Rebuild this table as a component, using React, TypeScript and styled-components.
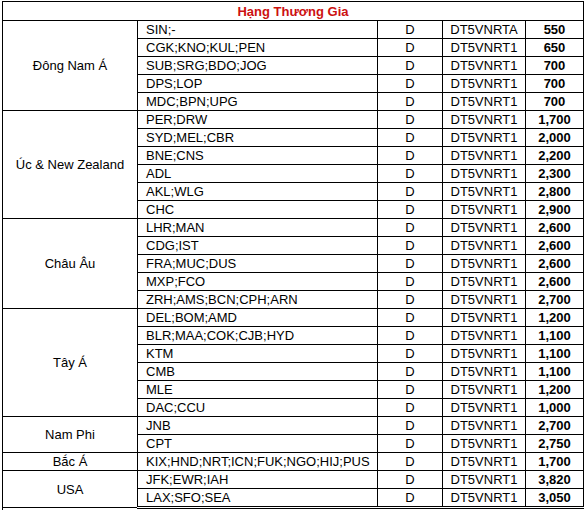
import React from "react";
import styled, { createGlobalStyle } from "styled-components";

type Fare = { route: string; cls: string; code: string; price: string };
type Region = { name: string; fares: Fare[] };

const f = (route: string, price: string, code = "DT5VNRT1"): Fare => ({ route, cls: "D", code, price });

const regions: Region[] = [
    {
        name: "Đông Nam Á",
        fares: [
            f("SIN;-", "550", "DT5VNRTA"),
            f("CGK;KNO;KUL;PEN", "650"),
            f("SUB;SRG;BDO;JOG", "700"),
            f("DPS;LOP", "700"),
            f("MDC;BPN;UPG", "700"),
        ],
    },
    {
        name: "Úc & New Zealand",
        fares: [
            f("PER;DRW", "1,700"),
            f("SYD;MEL;CBR", "2,000"),
            f("BNE;CNS", "2,200"),
            f("ADL", "2,300"),
            f("AKL;WLG", "2,800"),
            f("CHC", "2,900"),
        ],
    },
    {
        name: "Châu Âu",
        fares: [
            f("LHR;MAN", "2,600"),
            f("CDG;IST", "2,600"),
            f("FRA;MUC;DUS", "2,600"),
            f("MXP;FCO", "2,600"),
            f("ZRH;AMS;BCN;CPH;ARN", "2,700"),
        ],
    },
    {
        name: "Tây Á",
        fares: [
            f("DEL;BOM;AMD", "1,200"),
            f("BLR;MAA;COK;CJB;HYD", "1,100"),
            f("KTM", "1,100"),
            f("CMB", "1,100"),
            f("MLE", "1,200"),
            f("DAC;CCU", "1,000"),
        ],
    },
    {
        name: "Nam Phi",
        fares: [f("JNB", "2,700"), f("CPT", "2,750")],
    },
    {
        name: "Bắc Á",
        fares: [f("KIX;HND;NRT;ICN;FUK;NGO;HIJ;PUS", "1,700")],
    },
    {
        name: "USA",
        fares: [f("JFK;EWR;IAH", "3,820"), f("LAX;SFO;SEA", "3,050")],
    },
];

const columnWidths = [135, 240, 65, 83, 58];

export default function App() {
    return (
        <>
            <GlobalStyle />
            <FareTable>
                <colgroup>
                    {columnWidths.map((w, i) => (
                        <Col key={i} $w={w} />
                    ))}
                </colgroup>
                <tbody>
                    <tr>
                        <TitleCell colSpan={5}>Hạng Thương Gia</TitleCell>
                    </tr>
                    {regions.map((region) =>
                        region.fares.map((fare, i) => (
                            <tr key={region.name + fare.route}>
                                {i === 0 && <RegionCell rowSpan={region.fares.length}>{region.name}</RegionCell>}
                                <RouteCell>{fare.route}</RouteCell>
                                <Cell>{fare.cls}</Cell>
                                <Cell>{fare.code}</Cell>
                                <Cell $bold>{fare.price}</Cell>
                            </tr>
                        ))
                    )}
                    <tr>
                        <TailCell />
                        <TailRest colSpan={4} />
                    </tr>
                </tbody>
            </FareTable>
        </>
    );
}

const GlobalStyle = createGlobalStyle`
    body {
        margin: 0;
        background: #fff;
        font-family: "Liberation Sans", Arial, sans-serif;
        font-size: 13px;
        color: #000;
    }
`;

const FareTable = styled.table`
    border-collapse: collapse;
    table-layout: fixed;
    width: 581px;
    margin: 1px 0 0 2px;
`;

const Col = styled.col<{ $w: number }>`
    width: ${(p) => p.$w}px;
`;

const Cell = styled.td<{ $bold?: boolean }>`
    border: 1px solid #000;
    height: 17px;
    padding: 0;
    line-height: 15px;
    text-align: center;
    white-space: nowrap;
    font-weight: ${(p) => (p.$bold ? "bold" : "normal")};
`;

const TitleCell = styled(Cell)`
    height: 18px;
    color: #cc1111;
    font-weight: bold;
`;

const RouteCell = styled(Cell)`
    text-align: left;
    padding-left: 8px;
`;

const RegionCell = styled(Cell)`
    vertical-align: middle;
`;

const TailCell = styled.td`
    height: 3px;
    padding: 0;
    border-left: 1px solid #000;
`;

const TailRest = styled.td`
    height: 3px;
    padding: 0;
    border-top: 3px double #000;
`;
